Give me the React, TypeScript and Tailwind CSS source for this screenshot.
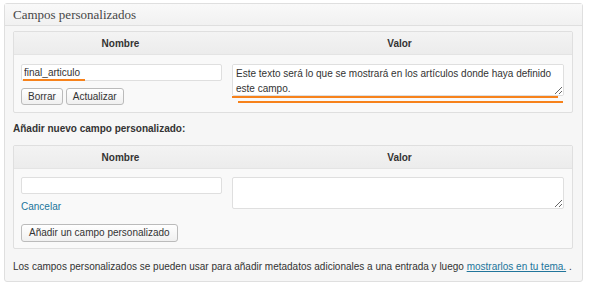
import React from 'react';

const sans = "font-['Liberation_Sans',Arial,sans-serif]";

function HeaderRow() {
  return (
    <div className="grid grid-cols-[213px_1fr] h-[23px] border-b border-[#e4e4e4] bg-gradient-to-b from-[#f3f3f3] to-[#ececec] text-[10px] font-bold text-[#333]">
      <div className="flex items-center justify-center">Nombre</div>
      <div className="flex items-center justify-center">Valor</div>
    </div>
  );
}

function Button({ children }: { children: React.ReactNode }) {
  return (
    <button className="h-[17px] px-[6px] rounded-[3px] border border-[#bbb] bg-gradient-to-b from-white to-[#f0f0f0] text-[10px] leading-none text-[#333]">
      {children}
    </button>
  );
}

export default function App() {
  return (
    <div className={`w-[590px] h-[285px] bg-white pt-[3px] pl-[4px] ${sans}`}>
      <div className="w-[579px] h-[279px] border border-[#dfdfdf] rounded-[3px] bg-[#f6f6f6]">
        {/* titulo */}
        <div className="h-[22px] flex items-center pl-[8px] border-b border-[#dfdfdf] bg-gradient-to-b from-[#f9f9f9] to-[#f1f1f1]">
          <h3 className="font-['Liberation_Serif',Georgia,serif] text-[13px] text-[#464646]">Campos personalizados</h3>
        </div>

        <div className="pl-[8px] pr-[9px] pt-[5px]">
          {/* campo existente */}
          <div className="border border-[#dfdfdf] rounded-[2px] bg-[#f9f9f9] h-[82px]">
            <HeaderRow />
            <div className="grid grid-cols-[213px_1fr] pt-[9px]">
              <div className="pl-[7px]">
                <div className="relative w-[201px]">
                  <input
                    readOnly
                    value="final_articulo"
                    className="block w-full h-[17px] px-[2px] border border-[#dfdfdf] rounded-[2px] bg-white text-[10px] text-[#333] outline-none"
                  />
                  <span className="absolute left-[2px] top-[15px] w-[62px] h-[2px] bg-[#f7821b]" />
                </div>
                <div className="flex gap-[3px] mt-[7px]">
                  <Button>Borrar</Button>
                  <Button>Actualizar</Button>
                </div>
              </div>
              <div className="pl-[5px] pr-[8px]">
                <div className="relative">
                  <textarea
                    readOnly
                    value={'Este texto será lo que se mostrará en los artículos donde haya definido\neste campo.'}
                    className="block w-full h-[32px] px-[3px] py-[1px] border border-[#dfdfdf] rounded-[2px] bg-white text-[10px] leading-[15px] text-[#333] outline-none"
                  />
                  <span className="absolute left-0 top-[32px] w-[326px] h-[2px] bg-[#f7821b]" />
                  <span className="absolute left-[6px] top-[37px] w-[325px] h-[2px] bg-[#f7821b]" />
                </div>
              </div>
            </div>
          </div>

          <p className="mt-[10px] text-[10px] font-bold text-[#333] leading-[12px]">Añadir nuevo campo personalizado:</p>

          {/* nuevo campo */}
          <div className="mt-[10px] border border-[#dfdfdf] rounded-[2px] bg-[#f9f9f9] h-[104px]">
            <HeaderRow />
            <div className="grid grid-cols-[213px_1fr] pt-[8px]">
              <div className="pl-[7px]">
                <input className="block w-[201px] h-[17px] px-[2px] border border-[#dfdfdf] rounded-[2px] bg-white text-[10px] outline-none" />
                <a href="#" className="block mt-[7px] text-[10px] leading-[12px] text-[#21759b]">Cancelar</a>
                <button className="block mt-[11px] h-[18px] px-[7px] rounded-[3px] border border-[#bbb] bg-gradient-to-b from-white to-[#f0f0f0] text-[10px] leading-none text-[#333]">
                  Añadir un campo personalizado
                </button>
              </div>
              <div className="pl-[5px] pr-[8px]">
                <textarea
                  readOnly
                  className="block w-full h-[32px] border border-[#dfdfdf] rounded-[2px] bg-white text-[10px] outline-none"
                />
              </div>
            </div>
          </div>

          <p className="mt-[12px] text-[10px] leading-[12px] text-[#333]">
            Los campos personalizados se pueden usar para añadir metadatos adicionales a una entrada y luego{' '}
            <a href="#" className="text-[#21759b] underline">mostrarlos en tu tema.</a> .
          </p>
        </div>
      </div>
    </div>
  );
}
